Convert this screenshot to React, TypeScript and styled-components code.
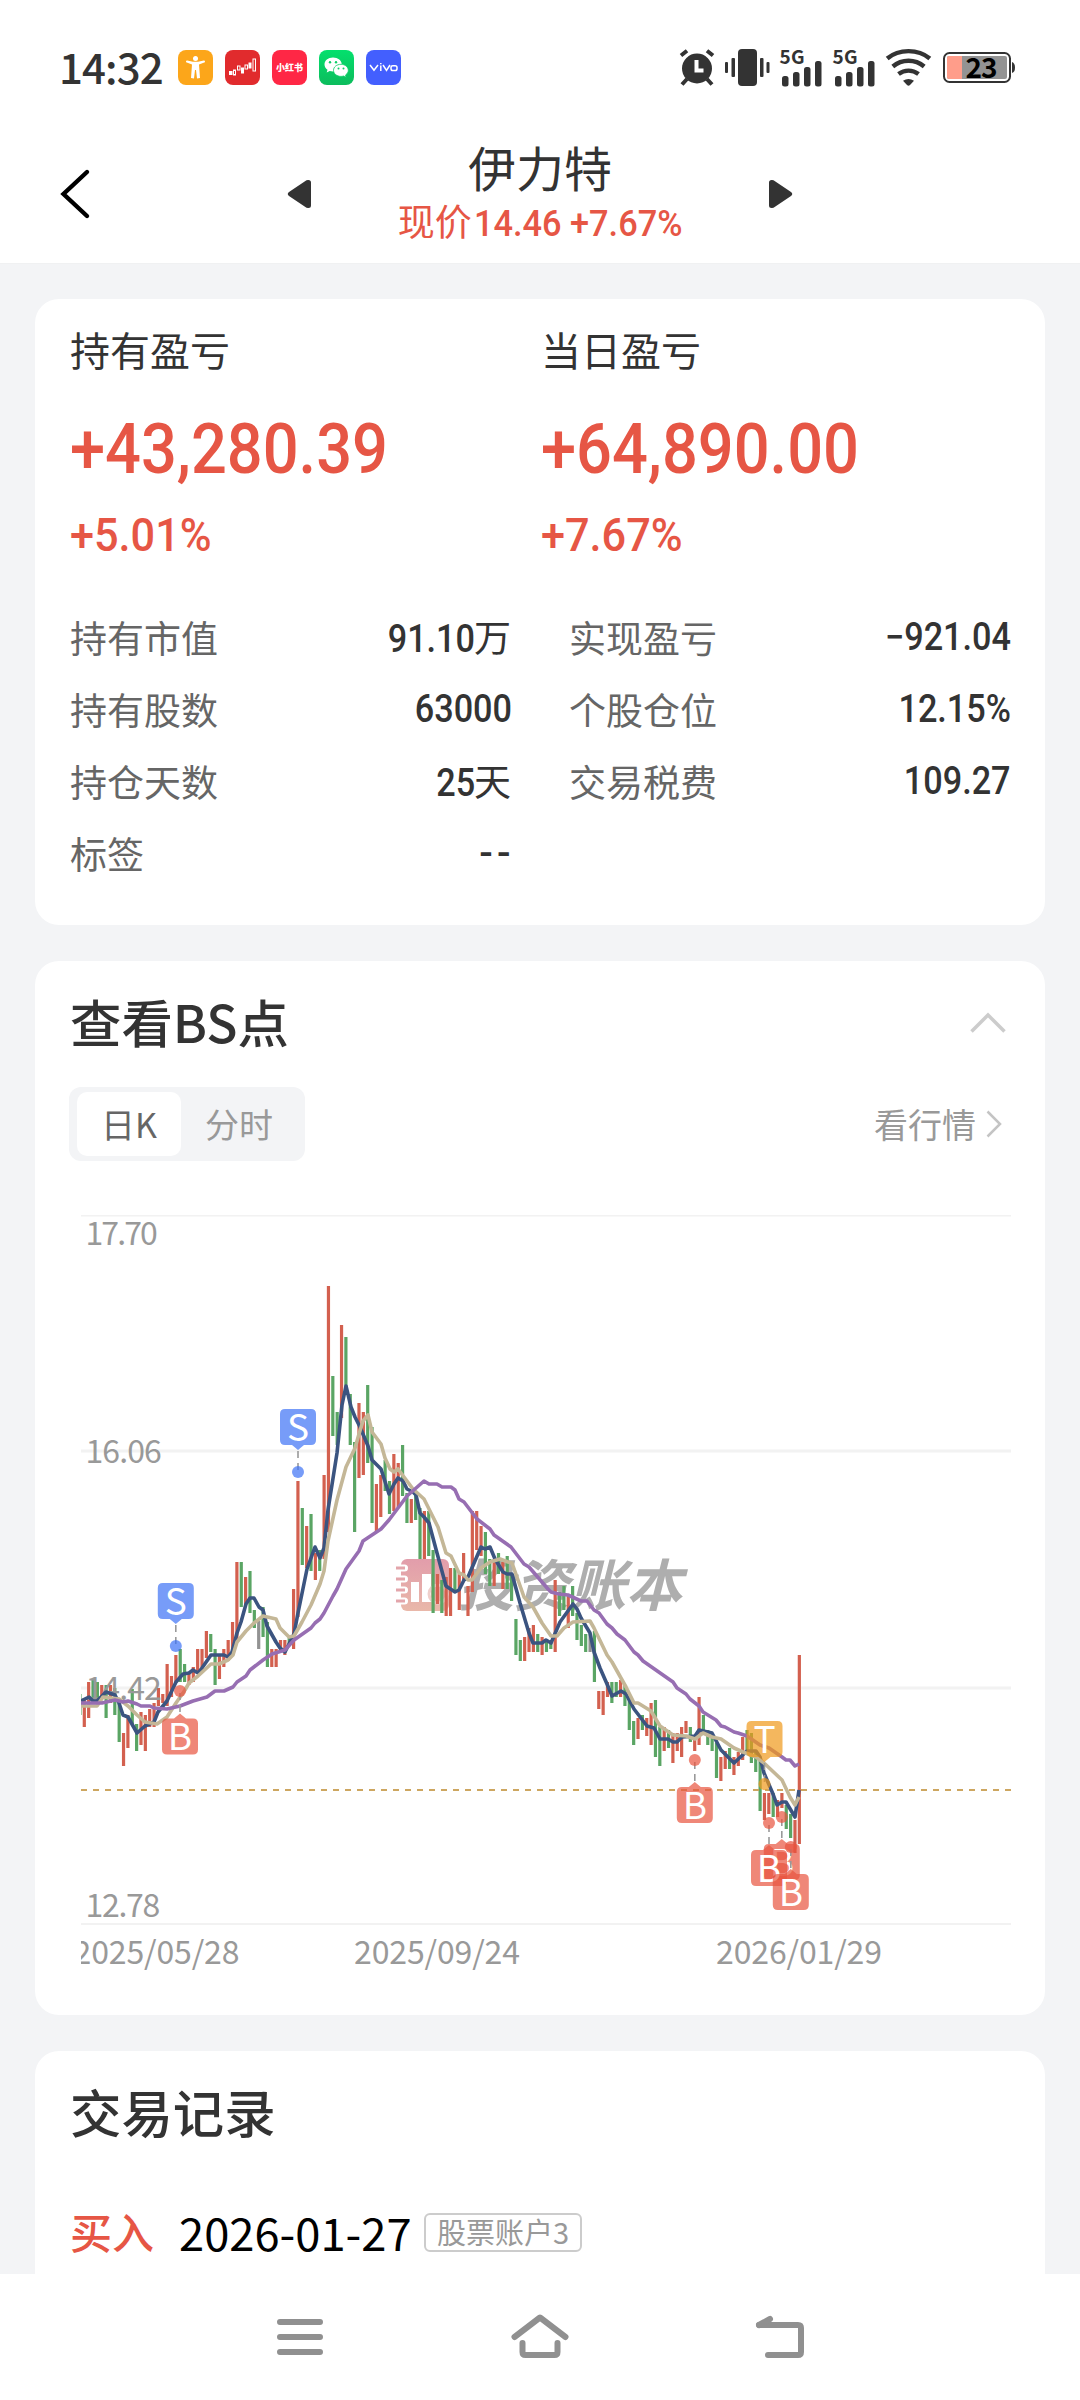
import React from 'react';
import styled, { createGlobalStyle } from 'styled-components';

const CJK = '"Noto Sans CJK SC", sans-serif';
const DIGITS = 'Roboto, "Noto Sans CJK SC", sans-serif';
const RED = '#e65645';
const INK = '#333333';

const GlobalStyle = createGlobalStyle`
  * { box-sizing: border-box; }
  body { margin: 0; background: #f3f4f6; }
  svg { overflow: visible; }
`;

const Screen = styled.div`
  width: 1080px;
  height: 2400px;
  display: flex;
  flex-direction: column;
  overflow: hidden;
  background: #f3f4f6;
  color: ${INK};
  font-family: ${CJK};
`;

/* ---------- status bar ---------- */
const StatusBar = styled.div`
  height: 136px;
  padding: 0 64px 1px 60px;
  display: flex;
  align-items: center;
  justify-content: space-between;
  background: #fff;
`;
const StatusGroup = styled.div<{ $gap: number }>`
  display: flex;
  align-items: center;
  gap: ${p => p.$gap}px;
`;
const Clock = styled.span`
  width: 106px;
  padding-bottom: 4px;
  font: 500 42px/48px ${CJK};
  letter-spacing: -0.9px;
  text-indent: -1px;
  white-space: nowrap;
`;
const Tile = styled.span<{ $bg: string }>`
  width: 35px;
  height: 35px;
  border-radius: 8px;
  display: flex;
  align-items: center;
  justify-content: center;
  overflow: hidden;
  background: ${p => p.$bg};
  color: #fff;
`;
const TileText = styled.span<{ $size: number }>`
  font: 900 ${p => p.$size}px/12px ${CJK};
  white-space: nowrap;
`;

/* ---------- header ---------- */
const Header = styled.header`
  height: 128px;
  padding: 0 60px 18px;
  display: grid;
  grid-template-columns: 227px 24px 1fr 24px 227px;
  align-items: center;
  background: #fff;
  border-bottom: 1px solid #f0f1f2;
`;
const HeaderTitles = styled.div`
  display: flex;
  flex-direction: column;
  align-items: center;
  padding-bottom: 3px;
`;
const StockName = styled.h1`
  margin: 0;
  font: 400 48px/60px ${CJK};
`;
const PriceLine = styled.div`
  display: flex;
  align-items: baseline;
  font: 400 37px/48px ${CJK};
  color: ${RED};
  white-space: nowrap;
`;
const HeaderPrice = styled.span`
  margin: 0 -13px 0 2px;
  font: 500 36.5px/48px ${DIGITS};
  transform: scaleX(0.94);
  transform-origin: left center;
`;

/* ---------- cards ---------- */
const Content = styled.main`
  flex: 1;
  min-height: 0;
  overflow: hidden;
  padding: 35px 35px 0;
  display: flex;
  flex-direction: column;
  gap: 36px;
`;
const Card = styled.section<{ $height: number }>`
  flex: none;
  height: ${p => p.$height}px;
  border-radius: 24px;
  background: #fff;
  padding: 0 35px;
`;
const ProfitRow = styled.div`
  display: grid;
  grid-template-columns: 471px 1fr;
  padding-top: 25px;
`;
const ProfitLabel = styled.div`
  font: 400 40px/50px ${CJK};
`;
const ProfitValue = styled.div<{ $size: number; $line: number; $scale: number }>`
  font: 500 ${p => p.$size}px/${p => p.$line}px ${DIGITS};
  color: ${RED};
  white-space: nowrap;
  transform: scaleX(${p => p.$scale});
  transform-origin: left center;
`;
const StatGrid = styled.div`
  margin-top: 55px;
  display: grid;
  grid-template-columns: 440px 440px;
  column-gap: 59px;
  grid-auto-rows: 72px;
`;
const Stat = styled.div`
  display: flex;
  align-items: center;
  justify-content: space-between;
  font: 400 37px/72px ${CJK};
`;
const StatLabel = styled.span`
  color: #666;
`;
const StatValue = styled.span`
  display: flex;
  align-items: baseline;
  margin-right: -1px;
  color: ${INK};
`;
const StatNumber = styled.span<{ $dashes?: boolean }>`
  font: 500 38px/72px ${DIGITS};
  letter-spacing: ${p => (p.$dashes ? 4 : 0)}px;
  margin-right: ${p => (p.$dashes ? -4 : -1)}px;
  transform: scaleX(${p => (p.$dashes ? 1.05 : 0.9)});
  transform-origin: right center;
`;

const CardHead = styled.div`
  height: 120px;
  padding-right: 4px;
  display: flex;
  align-items: center;
  justify-content: space-between;
`;
const CardTitle = styled.h2`
  margin: 0;
  font: 500 51.4px/74px ${CJK};
`;
const ChartTools = styled.div`
  margin-top: 6px;
  display: flex;
  align-items: center;
  justify-content: space-between;
  padding-right: 8px;
`;
const Segmented = styled.div`
  width: 236px;
  height: 74px;
  margin-left: -1px;
  padding: 5px 8px;
  display: flex;
  border-radius: 12px;
  background: #f3f4f6;
`;
const Segment = styled.button<{ $active?: boolean }>`
  width: ${p => (p.$active ? 104 : 116)}px;
  border: 0;
  padding: 0;
  border-radius: 10px;
  background: ${p => (p.$active ? '#fff' : 'transparent')};
  color: ${p => (p.$active ? '#666' : '#999')};
  font: 400 34px/60px ${CJK};
`;
const QuoteLink = styled.a`
  display: flex;
  align-items: center;
  gap: 10px;
  color: #999;
  font: 400 34px/50px ${CJK};
`;
const ChartBox = styled.div`
  margin: 54px 0 0 11px;
  width: 930px;
  overflow: hidden;
`;

/* ---------- records ---------- */
const Trade = styled.div`
  display: flex;
  align-items: flex-end;
  margin-top: 32px;
  height: 56px;
`;
const Side = styled.span`
  width: 109px;
  font: 500 42px/56px ${CJK};
  color: ${RED};
`;
const TradeDate = styled.span`
  width: 245px;
  font: 400 45.3px/56px ${CJK};
  color: #000;
  white-space: nowrap;
`;
const Account = styled.span`
  width: 158px;
  height: 39px;
  margin-bottom: 7px;
  border: 2px solid #ccc;
  border-radius: 6px;
  text-align: center;
  color: #999;
  font: 400 29px/32px ${CJK};
`;

/* ---------- navigation ---------- */
const NavBar = styled.nav`
  flex: none;
  height: 126px;
  padding: 0 265px;
  display: flex;
  align-items: center;
  justify-content: space-between;
  background: #fff;
`;

/* ---------- chart data ---------- */
type Candle = [number, number, string];
const STEP = 4.36;
const FIRST_X = -1.06;

const parse = (rows: string): Candle[] =>
  rows.trim().split(/\s+/).map(row => {
    const [top, bottom, kind] = row.split(',');
    return [Number(top), Number(bottom), kind];
  });

/* high, low, direction (r = up, g = down, n = flat) for each trading day */
const candles = parse(`
479,500,g 483,512,r 467,503,r 465,486,g 467,486,g 470,483,r 470,503,g 470,488,r 473,500,g 483,527,g
518,551,r 500,533,r 474,509,g 509,536,g 497,530,r 500,536,r 494,512,r 488,512,r 473,491,r 479,488,r
449,491,r 461,482,r 440,467,r 434,467,g 449,467,g 458,470,r 452,467,r 434,458,r 434,456,r 416,443,r
419,437,g 434,470,g 440,464,r 434,452,r 425,446,r 407,440,r 347,425,r 347,392,g 362,389,r 356,398,g
395,413,g 406,434,n 392,422,g 407,452,g 434,452,r 434,452,r 425,437,r 425,440,r 422,431,g 374,434,r
266,402,r 293,350,g 311,353,r 299,356,g 338,365,r 335,356,g 260,344,r 71,317,r 161,221,g 197,230,g
110,203,r 122,176,g 179,230,g 227,317,g 188,263,r 197,260,r 170,248,g 212,308,g 269,317,r 260,302,r
245,276,g 266,299,g 239,296,r 248,292,r 230,281,g 278,308,g 284,308,r 278,305,g 293,344,g 296,344,r
296,341,g 335,398,g 359,389,r 365,398,g 362,401,r 353,401,r 353,377,g 359,395,r 338,365,r 371,401,r
296,377,r 296,335,r 311,341,r 317,359,g 344,371,g 344,371,r 338,359,g 347,374,r 341,374,g 359,386,g
404,440,g 425,446,g 422,446,r 413,437,r 410,437,r 419,437,g 422,440,r 425,437,g 426,434,g 365,437,r
377,401,g 371,395,g 380,413,r 371,401,g 398,425,g 410,431,g 419,437,g 419,437,n 416,467,g 476,494,r
476,500,r 467,482,r 467,488,g 467,482,g 465,482,r 470,491,g 482,515,g 506,530,g 503,524,r 500,515,g
503,521,r 488,530,r 485,542,g 512,551,g 512,536,r 515,533,g 518,548,r 518,536,r 512,542,r 506,518,r
512,527,g 521,536,r 482,530,r 500,518,g 515,530,g 518,536,g 528,563,g 542,566,r 536,554,r 533,554,g
542,560,r 537,551,r 522,545,r 515,536,g 518,548,g 536,557,g 545,596,g 578,605,r 578,599,r 578,602,g
585,602,r 578,593,r 590,614,g 599,623,g 605,638,r 440,629,r
`);
const CANDLE_COLORS: Record<string, string> = { r: '#d3604f', g: '#5aa564', n: '#929292' };

const averages = [
  {
    color: '#3b5480',
    points:
      '0,486 8,482 12,486 16,486 25,477 34,480 38,488 42,500 47,502 56,518 64,511 73,507 77,497 86,486 95,467 102,459 108,458 112,455 117,458 121,453 130,440 143,440 147,442 151,437 156,418 160,407 165,389 169,383 173,383 178,392 182,395 186,411 195,427 199,433 204,437 213,419 217,398 226,354 234,332 239,343 243,333 247,295 256,238 261,190 265,171 270,192 274,202 279,212 287,231 291,245 300,254 308,279 313,269 317,263 322,266 326,274 332,277 335,280 339,298 343,302 348,308 356,338 365,371 374,377 378,375 383,365 387,362 400,332 404,334 409,332 414,344 422,357 426,359 431,359 439,388 448,418 452,428 461,428 465,425 470,428 479,407 492,389 496,394 500,403 509,418 513,437 519,453 526,469 531,481 540,476 545,479 553,494 566,511 573,513 579,524 587,524 592,527 596,527 601,522 614,521 618,515 631,518 640,535 653,548 666,536 675,536 679,542 683,558 692,579 696,590 701,587 705,587 714,602 718,575',
  },
  {
    color: '#c4b797',
    points:
      '0,491 16,491 22,482 38,484 47,491 56,500 64,507 76,509 86,502 95,488 104,475 108,468 117,461 130,449 138,449 147,445 152,440 156,427 165,416 173,408 182,401 195,404 199,413 208,422 213,421 221,407 230,390 239,369 243,356 247,326 256,285 265,252 274,233 278,219 282,206 287,200 291,217 300,229 304,243 309,254 313,257 317,254 332,274 343,284 357,312 365,338 370,341 378,358 383,360 387,365 391,365 400,353 409,347 419,344 427,347 431,348 443,382 452,392 461,408 470,421 476,421 483,413 492,407 509,406 513,413 526,440 531,447 545,472 553,488 557,488 570,496 579,511 592,520 605,521 614,524 622,518 631,522 640,524 653,533 662,537 675,542 683,548 701,565 709,582 714,590 718,582',
  },
  {
    color: '#976eb2',
    points:
      '0,488 21,488 34,485 42,487 47,486 56,489 60,491 69,491 73,493 86,494 99,491 112,486 126,482 134,476 143,476 152,472 156,467 165,461 169,455 182,445 191,439 204,435 213,425 230,413 234,408 239,404 243,398 252,381 256,374 265,354 278,336 282,326 300,314 308,305 326,281 343,266 348,269 356,269 361,272 370,272 374,275 378,284 383,287 396,304 409,314 413,320 430,332 443,349 448,352 467,374 470,377 478,379 487,380 500,386 506,386 513,395 518,398 526,409 531,413 536,419 544,425 553,437 557,440 562,446 592,467 596,473 605,479 609,484 618,491 622,497 635,505 640,511 644,512 653,517 657,518 666,521 679,530 688,533 701,542 705,545 709,545 714,551 718,549',
  },
];

const GRID = [0, 236, 473, 709];
const priceLabels = [
  { y: 30, text: '17.70', spacing: -1.9 },
  { y: 248, text: '16.06', spacing: -0.9 },
  { y: 485, text: '14.42', spacing: -0.9 },
  { y: 702, text: '12.78', spacing: -1.3 },
];
const dateLabels = [
  { x: 75.5, text: '2025/05/28' },
  { x: 356, text: '2025/09/24' },
  { x: 718, text: '2026/01/29' },
];

interface Mark {
  kind: 'B' | 'S' | 'T';
  x: number;
  top: number;
  dot: number;
}
const marks: Mark[] = [
  { kind: 'S', x: 94.8, top: 368, dot: 431 },
  { kind: 'S', x: 217, top: 194, dot: 257 },
  { kind: 'B', x: 99, top: 503.5, dot: 476 },
  { kind: 'B', x: 613.8, top: 572, dot: 545 },
  { kind: 'T', x: 683.5, top: 506, dot: 569 },
  { kind: 'B', x: 700.8, top: 629, dot: 602 },
  { kind: 'B', x: 688, top: 635, dot: 608 },
  { kind: 'B', x: 709.8, top: 659, dot: 632 },
];
const MARK_COLORS = { B: '#e8543f', S: '#3d72f5', T: '#ef9819' };

function MarkFlag({ kind, x, top, dot }: Mark) {
  const below = top > dot;
  const tip = below ? top - 5 : top + 41;
  const base = below ? top : top + 36;
  return (
    <g>
      <line x1={x} x2={x} y1={dot} y2={tip} stroke="#999" strokeWidth="1.6" strokeDasharray="7 5" strokeDashoffset="-2" />
      <g fill={MARK_COLORS[kind]} fillOpacity="0.7">
        <circle cx={x} cy={dot} r="6" />
        <path
          d={`M${x - 18} ${top + 5}q0-5 5-5h26q5 0 5 5v26q0 5-5 5h-26q-5 0-5-5z M${x - 6} ${base}L${x} ${tip}L${x + 6} ${base}z`}
        />
      </g>
      <text x={x} y={top + 31.5} textAnchor="middle" fill="#fff" fontSize="37" fontFamily={CJK}>
        {kind}
      </text>
    </g>
  );
}

function Watermark() {
  return (
    <g>
      <defs>
        <linearGradient id="book" x1="0" y1="0" x2="0" y2="1">
          <stop offset="0" stopColor="#e29dab" />
          <stop offset="1" stopColor="#e9b8a9" />
        </linearGradient>
      </defs>
      <rect x="320" y="344" width="48" height="52" rx="6" fill="url(#book)" />
      {[353, 364, 375, 386].map(y => (
        <g key={y}>
          <rect x="315" y={y - 3.5} width="12" height="7" rx="3.5" fill="#fff" />
          <path d={`M315 ${y}h9`} stroke="#e3a5ab" strokeWidth="3" />
        </g>
      ))}
      <rect x="330" y="367" width="8" height="20" fill="#fff" />
      <rect x="341" y="359" width="9" height="28" fill="#fff" />
      <circle cx="357" cy="379" r="9" fill="none" stroke="#efcfcb" strokeWidth="3" />
      <text x="377" y="390.5" fontSize="56" fontWeight="700" fontStyle="italic" fill="#aeaeae" fontFamily={CJK} textLength="224">
        投资账本
      </text>
    </g>
  );
}

function Chart() {
  return (
    <svg width="930" height="760" viewBox="0 0 930 760" display="block">
      {GRID.map(y => (
        <line key={y} x1="0" x2="930" y1={y || 0.5} y2={y || 0.5} stroke="#f2f2f2" strokeWidth={y % 709 ? 3 : 2} />
      ))}
      <Watermark />
      {candles.map(([top, bottom, kind], i) => (
        <rect key={i} x={FIRST_X + i * STEP - 1.6} y={top} width="3.2" height={bottom - top} fill={CANDLE_COLORS[kind]} />
      ))}
      {priceLabels.map(l => (
        <text key={l.text} x="4.5" y={l.y} fontSize="32" fill="#999" fontFamily={CJK} letterSpacing={l.spacing} fontKerning="none">
          {l.text}
        </text>
      ))}
      <line x1="0" x2="930" y1="575" y2="575" stroke="#cda660" strokeWidth="2" strokeDasharray="6 6" />
      {averages.map(a => (
        <polyline key={a.color} points={a.points} fill="none" stroke={a.color} strokeWidth="3.6" strokeLinejoin="round" />
      ))}
      {marks.map(m => (
        <MarkFlag key={`${m.x}`} {...m} />
      ))}
      {dateLabels.map(l => (
        <text key={l.text} x={l.x} y="749" textAnchor="middle" fontSize="32" fill="#999" fontFamily={CJK} textLength="166">
          {l.text}
        </text>
      ))}
    </svg>
  );
}

/* ---------- status icons ---------- */
const Alarm = () => (
  <svg width="36" height="37" viewBox="0 0 36 37">
    <path d="M2 6.500L8 1.800M28 1.800L34 6.500" stroke={INK} strokeWidth="4" />
    <path d="M8 30L3 35.500M28 30L33 35.500" stroke={INK} strokeWidth="4" />
    <circle cx="18" cy="19.500" r="15" fill={INK} />
    <path d="M17.500 11v10.500h7" fill="none" stroke="#fff" strokeWidth="4" />
  </svg>
);
const Vibrate = () => (
  <svg width="45" height="37" viewBox="0 0 45 37" fill={INK}>
    <rect x="13" y="0" width="19" height="37" rx="4" />
    <rect x="0" y="13" width="3" height="11" rx="1" />
    <rect x="6.500" y="9" width="3.500" height="19" rx="1" />
    <rect x="35" y="9" width="3.500" height="19" rx="1" />
    <rect x="41.500" y="13" width="3" height="11" rx="1" />
  </svg>
);
const Signal = () => (
  <svg width="43" height="38" viewBox="0 0 43 38" fill={INK}>
    <text x="-0.500" y="14.500" fontSize="19" fontWeight="700" fontFamily={CJK} textLength="25">
      5G
    </text>
    <rect x="2" y="27" width="6.500" height="10.500" rx="2.500" />
    <rect x="13" y="23" width="6.500" height="14.500" rx="2.500" />
    <rect x="24" y="18" width="6.500" height="19.500" rx="2.500" />
    <rect x="35" y="12" width="6.500" height="25.500" rx="2.500" />
  </svg>
);
const Wifi = () => (
  <svg width="47" height="37" viewBox="0 0 47 37" fill="none" stroke={INK} strokeWidth="4.400">
    <path d="M1.200 9.500C13-0.300 32-0.300 43.800 9.500" />
    <path d="M6.800 17.500C16 9.800 29 9.800 38.200 17.500" />
    <path d="M12.500 25C18.500 20.500 26.500 20.500 32.500 25" />
    <path d="M17 31.800Q22.500 28 28 31.800L24 36Q22.500 37.500 21 36Z" fill={INK} stroke="none" />
  </svg>
);
const Battery = () => (
  <svg width="73" height="31" viewBox="0 0 73 31">
    <rect x="1" y="1" width="66" height="29" rx="5.500" fill="#fff" stroke={INK} strokeWidth="2" />
    <rect x="4" y="4" width="60" height="23" rx="2" fill="#939393" />
    <path d="M6 4h13v23h-13q-2 0-2-2v-19q0-2 2-2z" fill="#ff9d8a" />
    <path d="M69 10q3 1 3 5.500t-3 5.500z" fill={INK} />
    <text x="38" y="25.500" textAnchor="middle" fontSize="28" fontWeight="700" fill="#000" fontFamily={CJK} letterSpacing="-1">
      23
    </text>
  </svg>
);

const PersonGlyph = () => (
  <svg width="19" height="23" viewBox="0 0 19 23" fill="#fff">
    <circle cx="9.500" cy="2.500" r="2.500" />
    <path d="M1.200 4.600L7 5.800h5l5.800-1.200a1 1 0 0 1 .4 2L13 8.500l1 13.500-3 .5-1-8.500h-1l-1 8.500-3-.5 1-13.500L.8 6.600a1 1 0 0 1 .4-2z" />
  </svg>
);
const StocksGlyph = () => (
  <svg width="29" height="20" viewBox="0 0 29 20" fill="#fff">
    <rect x="1" y="13" width="3.500" height="4" />
    <rect x="5.500" y="12" width="2" height="5" fill="none" stroke="#fff" />
    <rect x="9.500" y="8" width="2.500" height="4" fill="none" stroke="#fff" />
    <rect x="13" y="9.500" width="3" height="6" />
    <rect x="17" y="7" width="2.500" height="4" fill="none" stroke="#fff" />
    <rect x="20.500" y="4.500" width="3" height="6" />
    <rect x="25" y="1" width="2.500" height="12" fill="none" stroke="#fff" />
  </svg>
);
const ChatGlyph = () => (
  <svg width="25" height="21" viewBox="0 0 25 21">
    <path d="M9 .5C4 .5.500 3.600.500 7.500c0 2.200 1.200 4 3 5.300l-.8 2.600 3-1.500c1 .3 2.200.5 3.300.5 5 0 8.800-3 8.800-6.900S14 .5 9 .5z" fill="#fff" />
    <path d="M17 7.300c-4.300 0-7.500 2.700-7.500 6s3.200 6.100 7.500 6.100c.9 0 1.800-.2 2.700-.4l2.500 1.300-.7-2.200c1.700-1.200 2.800-2.900 2.800-4.800 0-3.300-3.200-6-7.300-6z" fill="#fff" stroke="#0ccf66" strokeWidth=".8" />
    <g fill="#0ccf66">
      <circle cx="6" cy="5.300" r="1.200" />
      <circle cx="12" cy="5.300" r="1.200" />
      <circle cx="14.500" cy="11.500" r="1" />
      <circle cx="19.500" cy="11.500" r="1" />
    </g>
  </svg>
);
const VivoGlyph = () => (
  <svg width="29" height="10" viewBox="0 0 29 10" fill="none" stroke="#fff" strokeWidth="1.500">
    <path d="M1 2l4 5.300L9 2M11.800 2.500v5.500M14 2l3.500 5.300L21 2" />
    <rect x="22" y="2.700" width="6" height="4.800" rx="1.800" />
    <path d="M11.800 0v1.300" />
  </svg>
);

const BackArrow = () => (
  <svg width="32" height="50" viewBox="0 0 32 50" fill="none" stroke="#000" strokeWidth="4.400" strokeLinecap="round">
    <path d="M27 3L3.500 25L27 47" />
  </svg>
);
const Triangle = ({ flip }: { flip?: boolean }) => (
  <svg width="24" height="30" viewBox="0 0 24 30" fill={INK}>
    <path
      d={
        flip
          ? 'M0 3.500Q0 .8 3 1Q4.500 1 6 2.200L22 13Q24.500 15 22 17L6 27.800Q4.500 29 3 29Q0 29.200 0 26.500z'
          : 'M24 3.500Q24 .8 21 1Q19.500 1 18 2.200L2 13Q-.5 15 2 17L18 27.800Q19.500 29 21 29Q24 29.200 24 26.500z'
      }
    />
  </svg>
);

const profits = [
  { label: '持有盈亏', value: '+43,280.39', rate: '+5.01%' },
  { label: '当日盈亏', value: '+64,890.00', rate: '+7.67%' },
];
const stats = [
  { label: '持有市值', num: '91.10', unit: '万' },
  { label: '实现盈亏', num: '−921.04' },
  { label: '持有股数', num: '63000' },
  { label: '个股仓位', num: '12.15%' },
  { label: '持仓天数', num: '25', unit: '天' },
  { label: '交易税费', num: '109.27' },
  { label: '标签', num: '--' },
];

export default function App() {
  return (
    <Screen>
      <GlobalStyle />
      <StatusBar>
        <StatusGroup $gap={12}>
          <Clock>14:32</Clock>
          <Tile $bg="#fca61a"><PersonGlyph /></Tile>
          <Tile $bg="#e12b2d"><StocksGlyph /></Tile>
          <Tile $bg="#ff2745"><TileText $size={9}>小红书</TileText></Tile>
          <Tile $bg="linear-gradient(#04e06d, #0cbc5c)"><ChatGlyph /></Tile>
          <Tile $bg="#435ffe"><VivoGlyph /></Tile>
        </StatusGroup>
        <StatusGroup $gap={10}>
          <Alarm />
          <Vibrate />
          <Signal />
          <Signal />
          <Wifi />
          <Battery />
        </StatusGroup>
      </StatusBar>

      <Header>
        <BackArrow />
        <Triangle />
        <HeaderTitles>
          <StockName>伊力特</StockName>
          <PriceLine>
            现价<HeaderPrice>14.46 +7.67%</HeaderPrice>
          </PriceLine>
        </HeaderTitles>
        <Triangle flip />
      </Header>

      <Content>
        <Card $height={626}>
          <ProfitRow>
            {profits.map(p => (
              <div key={p.label}>
                <ProfitLabel>{p.label}</ProfitLabel>
                <ProfitValue $size={70} $line={150} $scale={0.902}>{p.value}</ProfitValue>
                <ProfitValue $size={46} $line={22} $scale={0.94}>{p.rate}</ProfitValue>
              </div>
            ))}
          </ProfitRow>
          <StatGrid>
            {stats.map(s => (
              <Stat key={s.label}>
                <StatLabel>{s.label}</StatLabel>
                <StatValue>
                  <StatNumber $dashes={s.num === '--'}>{s.num}</StatNumber>
                  {s.unit}
                </StatValue>
              </Stat>
            ))}
          </StatGrid>
        </Card>

        <Card $height={1054}>
          <CardHead>
            <CardTitle>查看BS点</CardTitle>
            <svg width="36" height="22" viewBox="0 0 36 22" fill="none" stroke="#ccc" strokeWidth="3.500">
              <path d="M1.500 21.500L18 5L34.500 21.500" />
            </svg>
          </CardHead>
          <ChartTools>
            <Segmented>
              <Segment $active>日K</Segment>
              <Segment>分时</Segment>
            </Segmented>
            <QuoteLink>
              看行情
              <svg width="16" height="28" viewBox="0 0 16 28" fill="none" stroke="#c4c4c4" strokeWidth="2.500">
                <path d="M1.500 1.500L14 14L1.500 26.500" />
              </svg>
            </QuoteLink>
          </ChartTools>
          <ChartBox>
            <Chart />
          </ChartBox>
        </Card>

        <Card $height={420}>
          <CardHead>
            <CardTitle>交易记录</CardTitle>
          </CardHead>
          <Trade>
            <Side>买入</Side>
            <TradeDate>2026-01-27</TradeDate>
            <Account>股票账户3</Account>
          </Trade>
        </Card>
      </Content>

      <NavBar>
        <svg width="70" height="60" viewBox="0 0 70 60" stroke="#909090" strokeWidth="6" strokeLinecap="round">
          <path d="M15 15h40M15 30h40M15 45h40" />
        </svg>
        <svg width="70" height="60" viewBox="0 0 70 60" fill="none" stroke="#909090" strokeWidth="6" strokeLinecap="round" strokeLinejoin="round">
          <path d="M9.500 30L35 10.500L60.500 30M17.500 36v9q0 3 3 3h29q3 0 3-3v-9" />
        </svg>
        <svg width="70" height="60" viewBox="0 0 70 60" fill="none" stroke="#909090" strokeWidth="6" strokeLinecap="round">
          <path d="M14 18h39q3 0 3 3v24q0 3-3 3h-30" />
          <path d="M14 18L25 12" />
        </svg>
      </NavBar>
    </Screen>
  );
}
